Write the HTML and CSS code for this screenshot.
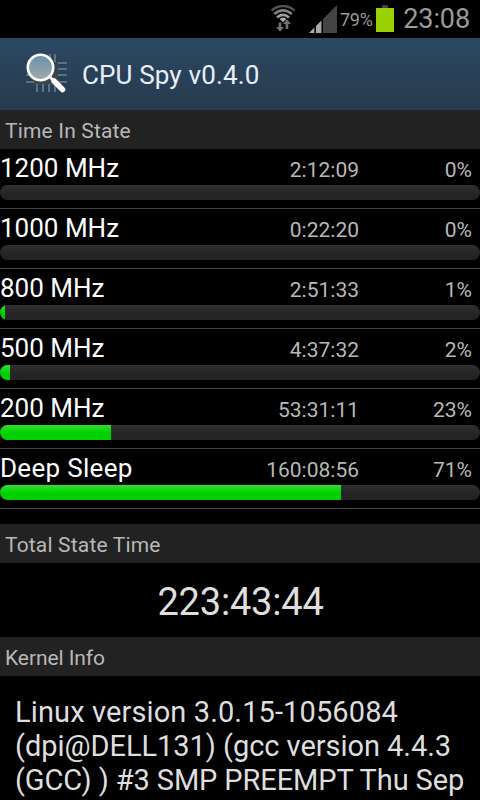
FILE: index.html
```html
<!DOCTYPE html>
<html lang="en">
<head>
<meta charset="utf-8">
<title>CPU Spy</title>
<link rel="stylesheet" href="styles.css">
</head>
<body>
<div class="status">
  <svg class="wifi" width="26" height="28" viewBox="0 0 26 28">
    <g fill="none" stroke-width="2.6">
      <path d="M1.500 5.500Q13-3.500 24.500 5.500" stroke="#505050"/>
      <path d="M4.200 9Q13 1.700 21.800 9" stroke="#808080"/>
      <path d="M7 12.500Q13 7.300 19 12.500" stroke="#a0a0a0"/>
    </g>
    <path d="M9.500 14Q13 11 16.500 14L13 17Z" fill="#b0b0b0"/>
    <path d="M8.700 17.500h2.600v4.500H14L10 26.800 6 22h2.700zM15.700 24h2.600v-5H21l-4-4.800-4 4.800h2.700z" fill="#707070"/>
  </svg>
  <svg class="signal" width="29" height="28" viewBox="0 0 29 28">
    <path d="M0 28L28 0V28Z" fill="#444"/>
    <path d="M0 28L5.500 22.500V28ZM7 28V21L12.500 15.500V28Z" fill="#a8a8a8"/>
    <path d="M6.200 20V28M13.300 13V28" stroke="#000" stroke-width="1.300"/>
  </svg>
  <span class="charge">79%</span>
  <svg class="battery" width="18" height="27" viewBox="0 0 18 27">
    <path d="M6 0h6v3H6z" fill="#444"/><path d="M0 3h18v24H0z" fill="#98d000"/>
  </svg>
  <span class="clock">23:08</span>
</div>
<header class="title-bar">
  <svg class="logo" width="42" height="42" viewBox="0 0 42 42">
    <defs><linearGradient id="lens" x2="0" y2="1"><stop stop-color="#6592a9"/><stop offset="1" stop-color="#a4aaac"/></linearGradient></defs>
    <path d="M7 8h25v24H7z" fill="#3b444b"/>
    <path d="M24 1v8M29 1v8M11 31v8M17 31v8M23 31v8M29 31v8M32 10h9M32 16h9M32 22h9M32 29h9M0 22h8M0 29h8" stroke="#71808b" stroke-width="1.600"/>
    <circle cx="14.500" cy="14.500" r="12.700" fill="url(#lens)" stroke="#fff" stroke-width="2.600"/>
    <path d="M23.500 23.500L28 28" stroke="#fff" stroke-width="2.800"/>
    <path d="M28 28L36.500 36.500" stroke="#fff" stroke-width="5.500" stroke-linecap="round"/>
  </svg>
  <h1>CPU Spy v0.4.0</h1>
</header>
<h2>Time In State</h2>
<ul class="states">
  <li><div class="line"><span class="name">1200 MHz</span><span class="time">2:12:09</span><span class="pct">0%</span></div><div class="track"></div></li>
  <li><div class="line"><span class="name">1000 MHz</span><span class="time">0:22:20</span><span class="pct">0%</span></div><div class="track"></div></li>
  <li><div class="line"><span class="name">800 MHz</span><span class="time">2:51:33</span><span class="pct">1%</span></div><div class="track"><div class="fill" style="width:1.05%"></div></div></li>
  <li><div class="line"><span class="name">500 MHz</span><span class="time">4:37:32</span><span class="pct">2%</span></div><div class="track"><div class="fill" style="width:2.08%"></div></div></li>
  <li><div class="line"><span class="name">200 MHz</span><span class="time">53:31:11</span><span class="pct">23%</span></div><div class="track"><div class="fill" style="width:23.13%"></div></div></li>
  <li><div class="line"><span class="name">Deep Sleep</span><span class="time">160:08:56</span><span class="pct">71%</span></div><div class="track"><div class="fill" style="width:71.05%"></div></div></li>
</ul>
<h2>Total State Time</h2>
<p class="total">223:43:44</p>
<h2 class="kernel-heading">Kernel Info</h2>
<p class="kernel"><span class="release">Linux version 3.0.15-1056084</span><br>(dpi@DELL131) (gcc version 4.4.3<br><span class="build">(GCC) ) #3 SMP PREEMPT Thu Sep</span></p>
</body>
</html>
```
FILE: styles.css
```css
* { box-sizing: border-box; }
body {
  margin: 0;
  height: 800px;
  overflow: hidden;
  background: #000;
  color: #dedede;
  font-family: Roboto, sans-serif;
}
h1, h2, p, ul { margin: 0; padding: 0; font-weight: 400; }
.status {
  display: flex;
  height: 38px;
  padding: 5px 10px 0 270px;
  color: #9a9a9a;
  white-space: nowrap;
}
.status svg { flex: none; }
.signal { margin-left: 13px; }
.charge { width: 34px; margin-left: 2px; font-size: 18px; line-height: 30px; letter-spacing: -0.3px; }
.battery { margin-left: 3px; }
.clock { margin-left: 9px; font-size: 27px; line-height: 29px; letter-spacing: -0.1px; }
.title-bar {
  display: flex;
  height: 72px;
  padding: 15px 0 0 26px;
  background: linear-gradient(#2c4862, #263a4e);
}
.title-bar h1 { margin-left: 14px; font-size: 26px; line-height: 44px; letter-spacing: 0.14px; color: #e8effa; }
h2 {
  height: 39px;
  padding-left: 5px;
  background: #222;
  color: #b8b8b8;
  font-size: 21px;
  line-height: 43px;
  letter-spacing: 0.17px;
}
.kernel-heading { letter-spacing: -0.08px; }
.states { list-style: none; height: 375px; }
.states li { height: 60px; border-bottom: 1px solid #444; }
.line { display: flex; height: 36px; line-height: 38px; color: #b8b8b8; }
.name { width: 200px; font-size: 26px; letter-spacing: 0; color: #fff; }
li:last-child .name { letter-spacing: 0.3px; }
.time { width: 159px; text-align: right; font-size: 21px; line-height: 42px; }
.pct { width: 113px; text-align: right; font-size: 21px; line-height: 42px; }
.track {
  height: 15px;
  border-radius: 7.5px;
  overflow: hidden;
  background: linear-gradient(#303030, #242424 60%);
}
.fill { height: 15px; background: linear-gradient(#30df30, #00d000 55%); }
.total { height: 74px; text-align: center; font-size: 38px; line-height: 78px; letter-spacing: -0.2px; padding-left: 1px; }
.kernel { padding: 19px 0 0 15px; font-size: 29px; line-height: 34px; white-space: nowrap; letter-spacing: -0.04px; }
.release { letter-spacing: 0.12px; }
.build { letter-spacing: -0.11px; }
```
